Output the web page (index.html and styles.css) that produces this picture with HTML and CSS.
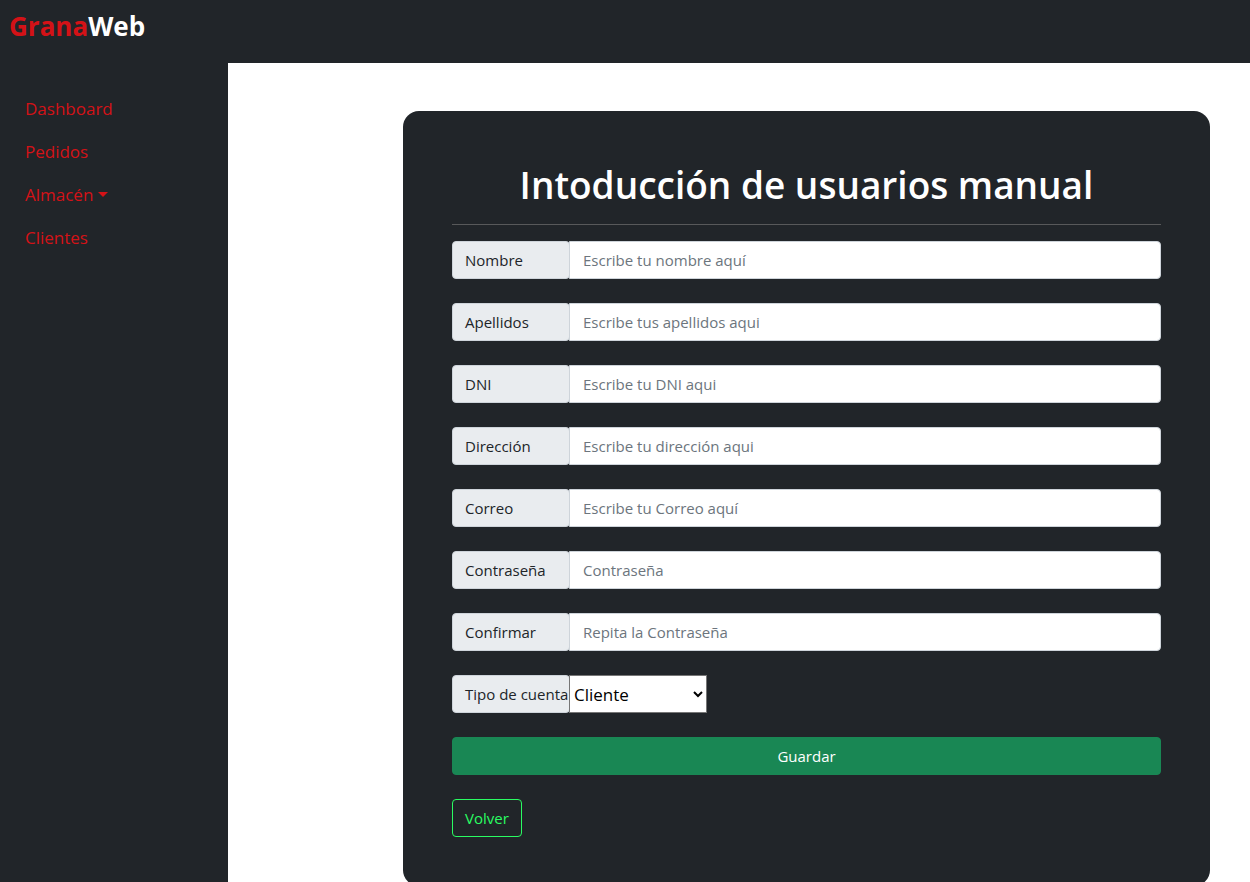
FILE: index.html
```html
<!DOCTYPE html>
<html lang="es">
<head>
<meta charset="utf-8">
<meta name="viewport" content="width=device-width, initial-scale=1">
<title>GranaWeb</title>
<link rel="stylesheet" href="styles.css">
</head>
<body class="page">
<header class="topbar">
  <a class="brand" href="#"><span class="brand-accent">Grana</span>Web</a>
</header>
<div class="layout">
  <nav class="sidebar">
    <a class="nav-link" href="#">Dashboard</a>
    <a class="nav-link" href="#">Pedidos</a>
    <a class="nav-link nav-dropdown" href="#">Almacén</a>
    <a class="nav-link" href="#">Clientes</a>
  </nav>
  <main class="content">
    <form class="card">
      <h1 class="card-title">Intoducción de usuarios manual</h1>
      <hr class="divider">
      <div class="fields">
        <div class="group"><label class="group-label" for="nombre">Nombre</label><input class="control" id="nombre" type="text" placeholder="Escribe tu nombre aquí"></div>
        <div class="group"><label class="group-label" for="apellidos">Apellidos</label><input class="control" id="apellidos" type="text" placeholder="Escribe tus apellidos aqui"></div>
        <div class="group"><label class="group-label" for="dni">DNI</label><input class="control" id="dni" type="text" placeholder="Escribe tu DNI aqui"></div>
        <div class="group"><label class="group-label" for="direccion">Dirección</label><input class="control" id="direccion" type="text" placeholder="Escribe tu dirección aqui"></div>
        <div class="group"><label class="group-label" for="correo">Correo</label><input class="control" id="correo" type="email" placeholder="Escribe tu Correo aquí"></div>
        <div class="group"><label class="group-label" for="clave">Contraseña</label><input class="control" id="clave" type="password" placeholder="Contraseña"></div>
        <div class="group"><label class="group-label" for="confirmar">Confirmar</label><input class="control" id="confirmar" type="password" placeholder="Repita la Contraseña"></div>
        <div class="group"><label class="group-label" for="tipo">Tipo de cuenta</label><select class="select" id="tipo"><option>Cliente</option><option>Administrador</option></select></div>
        <button class="btn btn-save" type="submit">Guardar</button>
        <a class="btn btn-back" href="#">Volver</a>
      </div>
    </form>
  </main>
</div>
</body>
</html>
```
FILE: styles.css
```css
*, *::before, *::after {
  box-sizing: border-box;
}

.page {
  display: flex;
  flex-direction: column;
  min-height: 100vh;
  margin: 0;
  background: #fff;
  color: #212529;
  font-family: "Segoe UI", "Open Sans", "Noto Sans", sans-serif;
  font-size: 15px;
  line-height: 24px;
}

.topbar {
  height: 63px;
  padding: 8px 9px;
  background: #212529;
}

.brand {
  color: #fff;
  font-size: 26px;
  font-weight: 700;
  line-height: 36px;
  text-decoration: none;
}

.brand-accent {
  color: #d41217;
}

.layout {
  display: flex;
  flex: 1;
}

.sidebar {
  display: flex;
  flex-direction: column;
  flex: 0 0 228px;
  padding: 24px 9px;
  background: #212529;
}

.nav-link {
  padding: 8px 16px;
  color: #d41217;
  font-size: 17px;
  line-height: 27px;
  text-decoration: none;
}

.nav-dropdown::after {
  content: "";
  display: inline-block;
  margin-left: 5px;
  vertical-align: 4px;
  border-top: 5px solid;
  border-right: 5px solid transparent;
  border-left: 5px solid transparent;
}

.content {
  flex: 1;
  min-width: 0;
  padding: 48px 40px 0 175px;
}

.card {
  padding: 49px;
  border-radius: 16px;
  background: #212529;
}

.card-title {
  margin: 0;
  color: #fff;
  font-size: 37px;
  font-weight: 600;
  line-height: 50px;
  text-align: center;
}

.divider {
  height: 1px;
  margin: 14px 0 16px;
  border: 0;
  background: #58595a;
}

.fields {
  display: flex;
  flex-direction: column;
  gap: 24px;
}

.group {
  display: flex;
  height: 38px;
}

.group-label {
  flex: 0 0 118px;
  min-width: 0;
  padding: 6px 0 6px 12px;
  border: 1px solid #ced4da;
  border-radius: 4px;
  background: #e9ecef;
  white-space: nowrap;
}

.control {
  flex: 1;
  min-width: 0;
  margin-left: -1px;
  padding: 6px 13px;
  border: 1px solid #ced4da;
  border-radius: 0 4px 4px 0;
  background: #fff;
  color: #212529;
  font: inherit;
}

.control::placeholder {
  color: #6c757d;
  opacity: 1;
}

.select {
  width: 138px;
  margin-left: -1px;
  border: 1px solid #767676;
  border-radius: 0;
  background: #fff;
  color: #000;
  font-family: inherit;
  font-size: 17px;
}

.btn {
  padding: 6px 12px;
  border: 1px solid;
  border-radius: 4px;
  font: inherit;
  text-align: center;
  text-decoration: none;
}

.btn-save {
  border-color: #198754;
  background: #198754;
  color: #fff;
}

.btn-back {
  align-self: flex-start;
  border-color: #2afc62;
  color: #2afc62;
}
```
